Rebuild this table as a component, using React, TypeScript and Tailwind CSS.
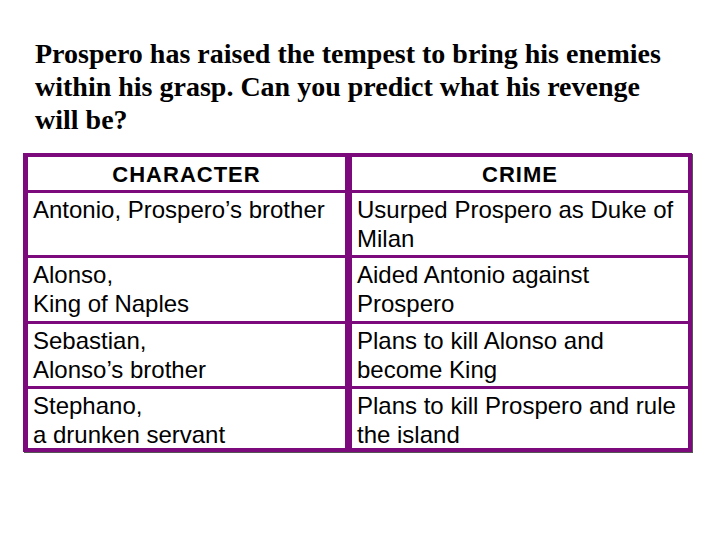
const ROWS = [
  { who: ["Antonio, Prospero’s brother"], crime: ["Usurped Prospero as Duke of", "Milan"], h: "h-[62px]" },
  { who: ["Alonso,", "King of Naples"], crime: ["Aided Antonio against", "Prospero"], h: "h-[63px]" },
  { who: ["Sebastian,", "Alonso’s brother"], crime: ["Plans to kill Alonso and", "become King"], h: "h-[62px]" },
  { who: ["Stephano,", "a drunken servant"], crime: ["Plans to kill Prospero and rule", "the island"], h: "h-[59px]" },
];

function Cell({ lines, h }: { lines: string[]; h: string }) {
  return (
    <div className={`${h} bg-white pl-[5px] pt-[2px] text-[24px] leading-[29px] text-black`}>
      {lines.map((l) => (
        <div key={l}>{l}</div>
      ))}
    </div>
  );
}

export default function App() {
  return (
    <div className="h-[540px] w-[720px] bg-white" style={{ fontFamily: '"Liberation Sans", Arial, sans-serif' }}>
      <h1
        className="pl-[35px] pt-[37px] text-[28px] font-bold leading-[33px] text-black"
        style={{ fontFamily: '"Liberation Serif", "Times New Roman", serif' }}
      >
        Prospero has raised the tempest to bring his enemies
        <br />
        within his grasp. Can you predict what his revenge
        <br />
        will be?
      </h1>

      <div className="ml-[23px] mt-[17px] w-[669px] border-[4px] border-x-[5px] border-[#7d0a7d] shadow-[1px_1px_0_#555]">
        <div className="grid grid-cols-[317px_336px] gap-x-[7px] gap-y-[3px] bg-[#7d0a7d]">
          <div className="flex h-[33px] items-center justify-center bg-white pt-[2px] text-[22px] font-bold tracking-[1px]">
            CHARACTER
          </div>
          <div className="flex h-[33px] items-center justify-center bg-white pt-[2px] text-[22px] font-bold tracking-[1px]">
            CRIME
          </div>
          {ROWS.map((r) => (
            <div key={r.who[0]} className="contents">
              <Cell lines={r.who} h={r.h} />
              <Cell lines={r.crime} h={r.h} />
            </div>
          ))}
        </div>
      </div>
    </div>
  );
}
